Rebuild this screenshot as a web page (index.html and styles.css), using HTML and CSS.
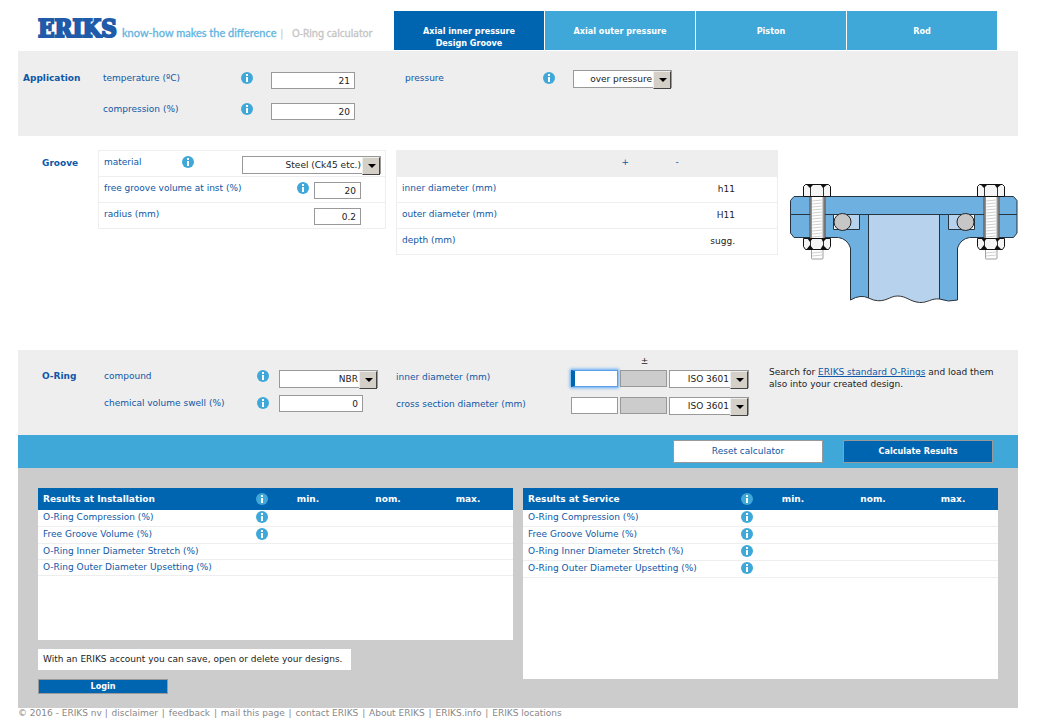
FILE: index.html
```html
<!DOCTYPE html>
<html lang="en">
<head>
<meta charset="utf-8">
<title>ERIKS O-Ring calculator</title>
<link rel="stylesheet" href="styles.css">
</head>
<body>
<svg class="defs" width="0" height="0" aria-hidden="true">
  <symbol id="info" viewBox="0 0 12 12">
    <circle cx="6" cy="6" r="6" fill="#3fa8d8"/>
    <path d="M5 2h2v2H5zM5 5h2v5H5z" fill="#fff"/>
  </symbol>
</svg>
<div class="page">
  <header class="header">
    <div class="brand">
      <span class="logo">ERIKS</span>
      <span class="tagline">know-how makes the difference</span>
      <span class="divider">|</span>
      <span class="product">O-Ring calculator</span>
    </div>
    <nav class="tabs">
      <a class="tab tab-active" href="#inner">Axial inner pressure<br>Design Groove</a>
      <a class="tab" href="#outer">Axial outer pressure</a>
      <a class="tab" href="#piston">Piston</a>
      <a class="tab" href="#rod">Rod</a>
    </nav>
  </header>

  <form class="calculator">
    <section class="application">
      <h2 class="title">Application</h2>
      <label class="label" for="temperature">temperature (ºC)</label>
      <svg class="info"><use href="#info"/></svg>
      <input class="field" id="temperature" value="21">
      <label class="label" for="pressure">pressure</label>
      <svg class="info"><use href="#info"/></svg>
      <span class="select"><select id="pressure"><option>over pressure</option></select></span>
      <label class="label second" for="compression">compression (%)</label>
      <svg class="info"><use href="#info"/></svg>
      <input class="field" id="compression" value="20">
    </section>

    <section class="groove">
      <h2 class="title">Groove</h2>
      <div class="props">
        <div class="prop">
          <label class="label material" for="material">material</label>
          <svg class="info"><use href="#info"/></svg>
          <span class="select select-wide"><select id="material"><option>Steel (Ck45 etc.)</option></select></span>
        </div>
        <div class="prop">
          <label class="label" for="volume">free groove volume at inst (%)</label>
          <svg class="info"><use href="#info"/></svg>
          <input class="field field-small" id="volume" value="20">
        </div>
        <div class="prop">
          <label class="label" for="radius">radius (mm)</label>
          <input class="field field-small" id="radius" value="0.2">
        </div>
      </div>
      <table class="tolerances">
        <thead><tr><th class="dim"></th><th class="plus">+</th><th class="minus">-</th><th></th></tr></thead>
        <tbody>
          <tr><td>inner diameter (mm)</td><td></td><td></td><td class="value">h11</td></tr>
          <tr><td>outer diameter (mm)</td><td></td><td></td><td class="value">H11</td></tr>
          <tr><td>depth (mm)</td><td></td><td></td><td class="value">sugg.</td></tr>
        </tbody>
      </table>
      <svg class="diagram" viewBox="0 0 228 122" role="img" aria-label="Flange cross section">
        <defs>
          <g id="bolt">
            <path d="M20 13h15v43H20z" fill="#a5a5a5" stroke="#333" stroke-width=".8"/>
            <path d="M21.500 13h11.500v62q0 1-1 1h-9.500q-1 0-1-1z" fill="#fff" stroke="#777" stroke-width=".7"/>
            <path d="M22 18l10-1M22 21l10-1M22 24l10-1M22 27l10-1M22 30l10-1M22 33l10-1M22 36l10-1M22 39l10-1M22 42l10-1M22 45l10-1M22 48l10-1M22 51l10-1M22 54l10-1M22 70l10-1M22 73l10-1" stroke="#bbb" stroke-width=".7"/>
            <path d="M15.500 1.500h23l2 2v10h-27v-10z" fill="#f5f5f5" stroke="#111"/>
            <path d="M13.500 55.500h27v8l-2 3h-23l-2-3z" fill="#f5f5f5" stroke="#111"/>
            <path d="M20.500 3v10M33.500 3v10M20.500 56v10M33.500 56v10" stroke="#333"/>
            <path d="M16 1l4 4 4-4zM30 1l3 4 5-4zM16 67l4-5 4 5zM30 67l3-5 5 5zM17 55l3 4 3-4zM31 55l2 4 4-4z" fill="#111"/>
          </g>
        </defs>
        <path d="M78.500 31.500h71V116c-8-1-12 4-20 3.500-10-1-13-6.500-22-6.500-8 0-12 7-24 4l-5-2z" fill="#b7d2ed" stroke="#333"/>
        <path d="M.5 31.500h78V115q-8-4-18 2V65q-3-9-12-10.500H4L.5 50z" fill="#6eb0e0" stroke="#26343f"/>
        <path d="M227 31.500h-77.500V116q9 3.500 18 1V65q3-9 12-10.500h44l3.500-4.500z" fill="#6eb0e0" stroke="#26343f"/>
        <path d="M4 13.500h219.500l3.500 4v14H.5v-14z" fill="#6eb0e0" stroke="#26343f"/>
        <path d="M43.500 31.500h26v15h-26zM158.500 31.500h26v15h-26z" fill="#b7d2ed" stroke="#26343f"/>
        <path d="M44 32h5l-5 5zM44 46v-5l5 5zM184 32h-5l5 5zM184 46v-5l-5 5z" fill="#fff"/>
        <circle cx="52.500" cy="39" r="8.500" fill="#c6c6c6" stroke="#222"/>
        <circle cx="175.500" cy="39" r="8.500" fill="#c6c6c6" stroke="#222"/>
        <use href="#bolt"/>
        <use href="#bolt" x="174"/>
      </svg>
    </section>

    <section class="oring">
      <h2 class="title">O-Ring</h2>
      <div class="compound">
        <label class="label" for="compound">compound</label>
        <svg class="info"><use href="#info"/></svg>
        <span class="select"><select id="compound"><option>NBR</option></select></span>
        <label class="label" for="swell">chemical volume swell (%)</label>
        <svg class="info"><use href="#info"/></svg>
        <input class="field" id="swell" value="0">
      </div>
      <div class="sizes">
        <span class="sign">±</span>
        <label class="label size-label" for="inner">inner diameter (mm)</label>
        <input class="field field-small field-focus" id="inner">
        <input class="field field-small" aria-label="inner diameter tolerance" disabled>
        <span class="select select-iso"><select aria-label="inner diameter standard"><option>ISO 3601</option></select></span>
        <label class="label size-label" for="cross">cross section diameter (mm)</label>
        <input class="field field-small" id="cross">
        <input class="field field-small" aria-label="cross section tolerance" disabled>
        <span class="select select-iso"><select aria-label="cross section standard"><option>ISO 3601</option></select></span>
      </div>
      <p class="hint">Search for <a href="#standard">ERIKS standard O-Rings</a> and load them also into your created design.</p>
    </section>

    <div class="actions">
      <button class="button button-light" type="reset">Reset calculator</button>
      <button class="button" type="button">Calculate Results</button>
    </div>
  </form>

  <main class="results">
    <div class="column">
      <div class="panel panel-install">
        <table class="result">
          <thead><tr><th class="name">Results at Installation</th><th class="icon"><svg class="info"><use href="#info"/></svg></th><th>min.</th><th>nom.</th><th>max.</th><th class="rest"></th></tr></thead>
          <tbody>
            <tr><td>O-Ring Compression (%)</td><td class="icon"><svg class="info"><use href="#info"/></svg></td><td></td><td></td><td></td><td></td></tr>
            <tr><td>Free Groove Volume (%)</td><td class="icon"><svg class="info"><use href="#info"/></svg></td><td></td><td></td><td></td><td></td></tr>
            <tr class="plain"><td>O-Ring Inner Diameter Stretch (%)</td><td></td><td></td><td></td><td></td><td></td></tr>
            <tr class="plain"><td>O-Ring Outer Diameter Upsetting (%)</td><td></td><td></td><td></td><td></td><td></td></tr>
          </tbody>
        </table>
      </div>
      <p class="notice">With an ERIKS account you can save, open or delete your designs.</p>
      <button class="button login" type="button">Login</button>
    </div>
    <div class="column">
      <div class="panel panel-service">
        <table class="result">
          <thead><tr><th class="name">Results at Service</th><th class="icon"><svg class="info"><use href="#info"/></svg></th><th>min.</th><th>nom.</th><th>max.</th><th class="rest"></th></tr></thead>
          <tbody>
            <tr><td>O-Ring Compression (%)</td><td class="icon"><svg class="info"><use href="#info"/></svg></td><td></td><td></td><td></td><td></td></tr>
            <tr><td>Free Groove Volume (%)</td><td class="icon"><svg class="info"><use href="#info"/></svg></td><td></td><td></td><td></td><td></td></tr>
            <tr><td>O-Ring Inner Diameter Stretch (%)</td><td class="icon"><svg class="info"><use href="#info"/></svg></td><td></td><td></td><td></td><td></td></tr>
            <tr><td>O-Ring Outer Diameter Upsetting (%)</td><td class="icon"><svg class="info"><use href="#info"/></svg></td><td></td><td></td><td></td><td></td></tr>
          </tbody>
        </table>
      </div>
    </div>
  </main>
  <footer class="footer">© 2016 - ERIKS nv | <a href="#d">disclaimer</a> | <a href="#f">feedback</a> | <a href="#m">mail this page</a> | <a href="#c">contact ERIKS</a> | <a href="#a">About ERIKS</a> | <a href="#i">ERIKS.info</a> | <a href="#l">ERIKS locations</a></footer>
</div>
</body>
</html>
```
FILE: styles.css
```css
* { box-sizing: border-box; }
body {
  margin: 0;
  background: #fff;
  color: #222;
  font-family: "DejaVu Sans", Verdana, sans-serif;
  font-size: 9px;
  line-height: 11px;
}
h2, p { margin: 0; }
input, select, button { font: inherit; color: inherit; margin: 0; }
.defs { display: block; }
.page { margin: 0 21px 0 18px; }

.header { display: flex; height: 51px; padding: 11px 21px 1px 20px; }
.brand { display: flex; align-items: baseline; flex: 0 0 356px; white-space: nowrap; }
.logo {
  width: 84px;
  color: #1f5ba8;
  font: bold 24px/36px "DejaVu Serif Condensed", "DejaVu Serif", serif;
  -webkit-text-stroke: 2px #1f5ba8;
}
.tagline { width: 158px; color: #5fb4df; font: 11px/14px Lato, sans-serif; -webkit-text-stroke: 0.3px #5fb4df; }
.divider { width: 12px; color: #c8c8c8; font-size: 11px; }
.product { color: #c4c4c4; font: 10px/14px "Noto Sans", sans-serif; -webkit-text-stroke: 0.3px #c4c4c4; }
.tabs { display: grid; grid-template-columns: repeat(4, 1fr); gap: 1px; flex: 1; }
.tab {
  padding-top: 14px;
  background: #3fa8d8;
  color: #fff;
  font: bold 9px/12px "DejaVu Sans Condensed", "DejaVu Sans", sans-serif;
  text-align: center;
  text-decoration: none;
}
.tab-active { background: #0065b1; }

.title { color: #0e57a6; font-size: 9px; line-height: 12px; }
.label { color: #0e57a6; line-height: 12px; }
.info { display: block; width: 12px; height: 12px; }
.field {
  width: 84px;
  height: 17px;
  padding: 0 4px;
  border: 1px solid #999;
  border-radius: 0;
  background: #fff;
  text-align: right;
}
.field-small { width: 47px; }
.field:disabled { background: #ccc; }
.field-focus {
  border-color: #5a9fe8;
  border-left: 4px solid #0065b1;
  outline: 0;
  box-shadow: 0 0 3px 1px #5aa7f5;
}
.select { position: relative; display: block; width: 99px; height: 18px; }
.select-wide { width: 139px; }
.select-iso { width: 80px; }
.select select {
  display: block;
  width: 100%;
  height: 18px;
  padding: 0 19px 0 3px;
  border: 1px solid #999;
  border-radius: 0;
  background: #fff;
  appearance: none;
  text-align: right;
  text-align-last: right;
}
.select::before {
  content: "";
  position: absolute;
  top: 1px;
  right: 1px;
  width: 16px;
  height: 16px;
  border: 1px solid;
  border-color: #eee #444 #444 #eee;
  background: #d4d0c8;
  pointer-events: none;
}
.select::after {
  content: "";
  position: absolute;
  top: 8px;
  right: 5px;
  border: 4px solid transparent;
  border-top-color: #000;
  border-bottom: 0;
  pointer-events: none;
}

.application {
  display: grid;
  grid-template-columns: 80px 138px 30px 134px 138px 30px 1fr;
  grid-auto-rows: 31px;
  height: 85px;
  padding: 21px 5px 0;
  background: #eee;
}
.application .second { grid-column: 2; }
.application .select { margin-top: -2px; }

.groove { display: flex; align-items: flex-start; height: 214px; padding: 14px 0 0 24px; }
.groove .title { width: 56px; padding-top: 7px; }
.props { width: 288px; border: 1px solid #eee; }
.prop { display: flex; height: 26px; padding: 5px 4px 0 5px; border-bottom: 1px solid #eee; }
.prop:last-child { border-bottom: 0; height: 25px; }
.prop .label { flex: 1; }
.prop .material { flex: 0 0 78px; }
.prop .select { margin-left: auto; }
.prop .field { margin: 0 20px 0 5px; }
.tolerances {
  flex: 1;
  margin: 0 12px 0 10px;
  border: 1px solid #eee;
  border-collapse: collapse;
  table-layout: fixed;
  color: #0e57a6;
}
.tolerances tr { height: 26px; border-bottom: 1px solid #eee; }
.tolerances th { padding: 0 0 2px; background: #eee; color: #0e57a6; font-weight: normal; text-align: left; }
.tolerances td { padding: 0 0 2px 5px; }
.tolerances .dim { width: 225px; }
.tolerances .plus { width: 54px; }
.tolerances .minus { width: 20px; }
.tolerances .value { padding: 0 42px 0 0; color: #222; text-align: right; }
.diagram { width: 228px; height: 122px; margin-top: 33px; }

.oring { display: flex; height: 85px; padding: 20px 20px 0 24px; background: #eee; }
.oring .title { width: 62px; }
.compound {
  display: grid;
  grid-template-columns: 153px 22px 117px;
  grid-template-rows: 27px 20px;
}
.compound .field { margin-top: -2px; }
.sizes {
  display: grid;
  grid-template-columns: 173px 47px 47px 80px;
  grid-template-rows: 14px 27px 20px;
  column-gap: 2px;
  flex: 0 0 373px;
  margin-top: -14px;
}
.sizes .sign { grid-column: 3; padding-left: 2px; text-align: center; }
.sizes .size-label { grid-column: 1; padding-top: 1px; }
.hint { flex: 1; margin-top: -4px; line-height: 12px; }
.hint a { color: #0e57a6; }

.actions { display: flex; gap: 20px; justify-content: flex-end; height: 33px; padding: 5px 25px; background: #3fa8d8; }
.button {
  width: 150px;
  height: 23px;
  padding: 0;
  border: 1px solid #999;
  background: #0065b1;
  color: #fff;
  font-family: "DejaVu Sans Condensed", "DejaVu Sans", sans-serif;
  font-weight: bold;
}
.button-light { background: #fff; color: #0e57a6; font-family: inherit; font-weight: normal; }

.results { display: grid; grid-template-columns: 1fr 1fr; gap: 10px; min-height: 240px; padding: 20px 20px 14px; background: #ccc; }
.panel { background: #fff; }
.panel-install { min-height: 152px; }
.panel-service { min-height: 191px; }
.result { width: 100%; border-spacing: 0; table-layout: fixed; color: #0e57a6; }
.result th, .result td { padding: 0; }
.result th { height: 22px; background: #0065b1; color: #fff; }
.result .name { width: 218px; padding-left: 5px; text-align: left; }
.result th.icon { width: 12px; }
.result th:not(.name, .icon, .rest) { width: 80px; }
.result td { height: 17px; padding-bottom: 2px; border-bottom: 1px solid #eee; }
.result td:first-child { padding-left: 5px; }
.result .plain td { height: 16px; padding-bottom: 0; }
.notice { width: max-content; margin-top: 9px; padding: 5px 9px 5px 5px; background: #fff; }
.login { display: block; width: 130px; height: 15px; margin-top: 9px; line-height: 11px; }
.footer { color: #888; line-height: 10px; }
.footer a { margin: 0 1px; color: inherit; text-decoration: none; }
```
